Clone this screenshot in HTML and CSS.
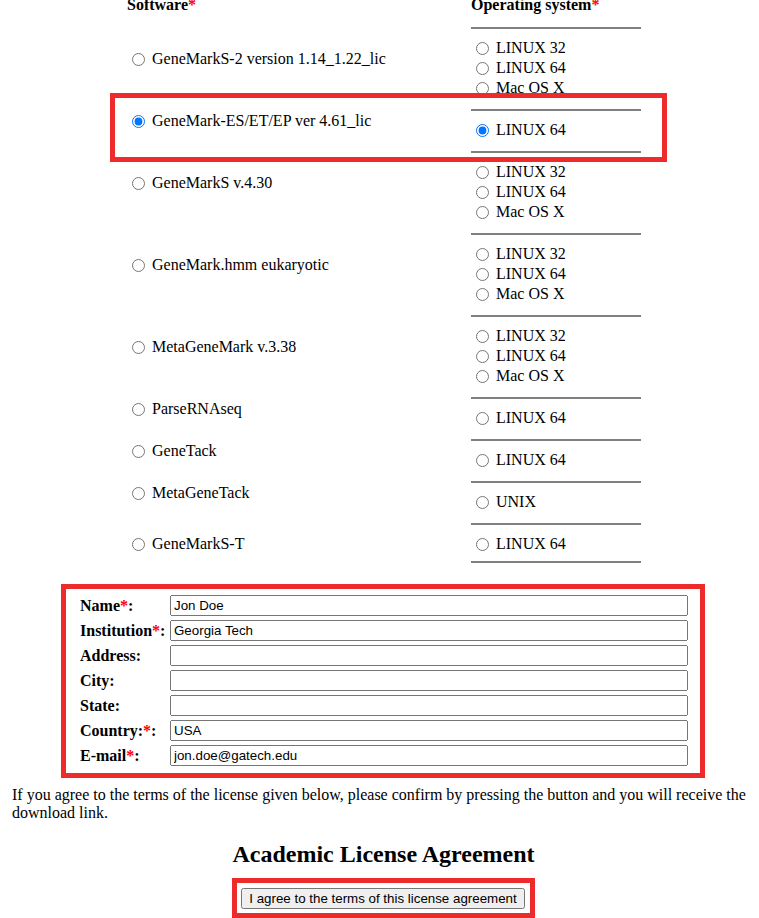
FILE: index.html
```html
<!DOCTYPE html>
<html>
<head>
<meta charset="utf-8">
<title>License</title>
<link rel="stylesheet" href="styles.css">
</head>
<body>
<div class="choices">
  <div class="row head">
    <div class="sw">Software<span class="req">*</span></div>
    <div class="os">Operating system<span class="req">*</span></div>
  </div>

  <div class="row">
    <div class="sw"><label class="opt"><input type="radio" name="sw">GeneMarkS-2 version 1.14_1.22_lic</label></div>
    <div class="os"><hr>
      <label class="opt"><input type="radio" name="os">LINUX 32</label>
      <label class="opt"><input type="radio" name="os">LINUX 64</label>
      <label class="opt"><input type="radio" name="os">Mac OS X</label>
    </div>
  </div>

  <div class="row picked">
    <div class="sw"><label class="opt"><input type="radio" name="sw" checked>GeneMark-ES/ET/EP ver 4.61_lic</label></div>
    <div class="os"><hr>
      <label class="opt"><input type="radio" name="os" checked>LINUX 64</label>
    </div>
    <div class="mark"></div>
  </div>

  <div class="row">
    <div class="sw"><label class="opt"><input type="radio" name="sw">GeneMarkS v.4.30</label></div>
    <div class="os"><hr>
      <label class="opt"><input type="radio" name="os">LINUX 32</label>
      <label class="opt"><input type="radio" name="os">LINUX 64</label>
      <label class="opt"><input type="radio" name="os">Mac OS X</label>
    </div>
  </div>

  <div class="row">
    <div class="sw"><label class="opt"><input type="radio" name="sw">GeneMark.hmm eukaryotic</label></div>
    <div class="os"><hr>
      <label class="opt"><input type="radio" name="os">LINUX 32</label>
      <label class="opt"><input type="radio" name="os">LINUX 64</label>
      <label class="opt"><input type="radio" name="os">Mac OS X</label>
    </div>
  </div>

  <div class="row">
    <div class="sw"><label class="opt"><input type="radio" name="sw">MetaGeneMark v.3.38</label></div>
    <div class="os"><hr>
      <label class="opt"><input type="radio" name="os">LINUX 32</label>
      <label class="opt"><input type="radio" name="os">LINUX 64</label>
      <label class="opt"><input type="radio" name="os">Mac OS X</label>
    </div>
  </div>

  <div class="row">
    <div class="sw"><label class="opt"><input type="radio" name="sw">ParseRNAseq</label></div>
    <div class="os"><hr>
      <label class="opt"><input type="radio" name="os">LINUX 64</label>
    </div>
  </div>

  <div class="row">
    <div class="sw"><label class="opt"><input type="radio" name="sw">GeneTack</label></div>
    <div class="os"><hr>
      <label class="opt"><input type="radio" name="os">LINUX 64</label>
    </div>
  </div>

  <div class="row">
    <div class="sw"><label class="opt"><input type="radio" name="sw">MetaGeneTack</label></div>
    <div class="os"><hr>
      <label class="opt"><input type="radio" name="os">UNIX</label>
    </div>
  </div>

  <div class="row">
    <div class="sw"><label class="opt"><input type="radio" name="sw">GeneMarkS-T</label></div>
    <div class="os"><hr>
      <label class="opt"><input type="radio" name="os">LINUX 64</label>
      <hr>
    </div>
  </div>
</div>

<div class="form-box">
  <label class="flabel" for="f-name">Name<span class="req">*</span>:</label>
  <input class="field" id="f-name" type="text" value="Jon Doe">
  <label class="flabel" for="f-inst">Institution<span class="req">*</span>:</label>
  <input class="field" id="f-inst" type="text" value="Georgia Tech">
  <label class="flabel" for="f-addr">Address:</label>
  <input class="field" id="f-addr" type="text" value="">
  <label class="flabel" for="f-city">City:</label>
  <input class="field" id="f-city" type="text" value="">
  <label class="flabel" for="f-state">State:</label>
  <input class="field" id="f-state" type="text" value="">
  <label class="flabel" for="f-country">Country:<span class="req">*</span>:</label>
  <input class="field" id="f-country" type="text" value="USA">
  <label class="flabel" for="f-mail">E-mail<span class="req">*</span>:</label>
  <input class="field" id="f-mail" type="text" value="jon.doe@gatech.edu">
</div>

<p class="intro">If you agree to the terms of the license given below, please confirm by pressing the button and you will receive the download link.</p>

<h2 class="title">Academic License Agreement</h2>

<div class="agree-wrap">
  <div class="agree-box">
    <button class="agree-btn" type="button">I agree to the terms of this license agreement</button>
  </div>
</div>
</body>
</html>
```

FILE: styles.css
```css
html, body {
  background: #ffffff;
}

body {
  margin: 0;
  font-family: "Liberation Serif", "Times New Roman", serif;
  font-size: 16px;
  color: #000000;
}

.req {
  color: #ff0000;
}

/* software / OS selection table */
.choices {
  display: flex;
  flex-direction: column;
  gap: 2px;
  margin: -4px 0 0 126px;
}

.row {
  display: flex;
}

.sw {
  box-sizing: border-box;
  width: 344px;
  padding: 1px 0 1px 1px;
  display: flex;
  align-items: center;
}

.os {
  box-sizing: border-box;
  width: 172px;
  padding: 1px;
}

.head {
  height: 20px;
}

.head .sw,
.head .os {
  padding: 0 0 0 1px;
  align-items: flex-start;
  font-weight: bold;
  line-height: 18px;
}

.os hr {
  margin: 8px 0;
  height: 0;
  border: 0;
  border-top: 2px solid #808080;
}

.opt {
  box-sizing: border-box;
  display: flex;
  align-items: center;
  height: 20px;
  padding-top: 2px;
  white-space: nowrap;
}

.opt input {
  margin: 0 7px 0 5px;
  width: 13px;
  height: 13px;
}

.picked {
  position: relative;
}

.mark {
  position: absolute;
  left: -16px;
  top: -7px;
  width: 557px;
  height: 69px;
  box-sizing: border-box;
  border: 5px solid #ee2b2b;
  pointer-events: none;
}

/* personal data form */
.form-box {
  box-sizing: border-box;
  width: 644px;
  margin: 12px 0 0 61px;
  border: 5px solid #ee2b2b;
  padding: 6px 12px 7px 14px;
  display: grid;
  grid-template-columns: 90px 518px;
  row-gap: 4px;
  align-items: center;
}

.flabel {
  font-weight: bold;
  line-height: 18px;
  white-space: nowrap;
}

.field {
  box-sizing: border-box;
  width: 518px;
  height: 21px;
  margin: 0;
  font-family: "Liberation Sans", Arial, sans-serif;
  font-size: 13.333px;
}

.intro {
  margin: 8px 4px 0 12px;
  line-height: 18px;
}

.title {
  margin: 18px 4px 0 12px;
  font-size: 24px;
  line-height: 28px;
  font-weight: bold;
  text-align: center;
}

.agree-wrap {
  display: flex;
  justify-content: center;
  margin: 10px 4px 0 12px;
}

.agree-box {
  border: 5px solid #ee2b2b;
  padding: 5px 5px 4px 4px;
}

.agree-btn {
  display: block;
  margin: 0;
  font-family: "Liberation Sans", Arial, sans-serif;
  font-size: 13.333px;
}
```
